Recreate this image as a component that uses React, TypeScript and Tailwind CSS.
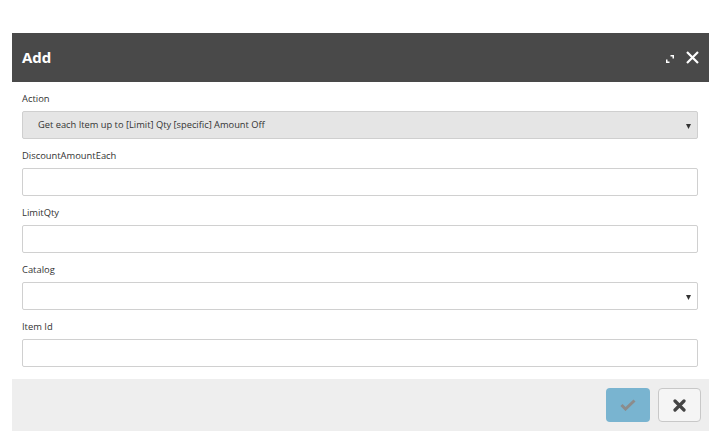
const font = { fontFamily: '"Open Sans", "Segoe UI", sans-serif' };

function Field({ label, children }: { label: string; children: React.ReactNode }) {
  return (
    <div className="mt-[8px] first:mt-0">
      <div className="h-[18px] leading-[18px] text-[9.4px] text-[#333] mb-[3px]">{label}</div>
      {children}
    </div>
  );
}

function Caret() {
  return (
    <svg width="5" height="6" viewBox="0 0 5 6" className="absolute right-[6px] top-[11px]">
      <path d="M0 1h5L2.5 6z" fill="#333" />
    </svg>
  );
}

export default function App() {
  return (
    <div className="w-[721px] h-[446px] bg-white pt-[33px] pl-[12px]" style={font}>
      <div className="w-[697px]">
        <div className="h-[49px] bg-[#494949] flex items-center pl-[10px] pr-[10px]">
          <span className="text-white font-bold text-[15px]">Add</span>
          <div className="ml-auto flex items-center gap-[12px]">
            <svg width="8" height="8" viewBox="0 0 8 8" className="mt-[2px]">
              <path d="M4.5 0.75H7.25V3.5M0.75 4.5V7.25H3.5" stroke="white" strokeWidth="1.5" fill="none" />
            </svg>
            <svg width="13" height="13" viewBox="0 0 13 13">
              <path d="M1 1L12 12M12 1L1 12" stroke="white" strokeWidth="2.2" />
            </svg>
          </div>
        </div>
        <div className="pt-[8px] pb-[12px] pl-[10px] pr-[11px]">
          <Field label="Action">
            <div className="relative h-[28px] bg-[#e5e5e5] border border-[#cfcfcf] rounded-[2px] flex items-center pl-[15px] text-[9.3px] text-[#333]">
              Get each Item up to [Limit] Qty [specific] Amount Off
              <Caret />
            </div>
          </Field>
          <Field label="DiscountAmountEach">
            <input className="block w-full h-[28px] border border-[#d0d0d0] rounded-[2px] outline-none" />
          </Field>
          <Field label="LimitQty">
            <input className="block w-full h-[28px] border border-[#d0d0d0] rounded-[2px] outline-none" />
          </Field>
          <Field label="Catalog">
            <div className="relative h-[28px] bg-white border border-[#d0d0d0] rounded-[2px]">
              <Caret />
            </div>
          </Field>
          <Field label="Item Id">
            <input className="block w-full h-[28px] border border-[#d0d0d0] rounded-[2px] outline-none" />
          </Field>
        </div>
        <div className="h-[52px] bg-[#eeeeee] flex items-center justify-end gap-[8px] pr-[8px]">
          <button className="w-[44px] h-[34px] rounded-[4px] bg-[#79b4d0] flex items-center justify-center">
            <svg width="16" height="12" viewBox="0 0 16 12">
              <path d="M1.5 6L5.5 10L14.5 1.5" stroke="#8c8c8c" strokeWidth="3" fill="none" />
            </svg>
          </button>
          <button className="w-[43px] h-[34px] rounded-[4px] bg-[#f5f5f5] border border-[#c8c8c8] flex items-center justify-center">
            <svg width="13" height="13" viewBox="0 0 13 13">
              <path d="M2 2L11 11M11 2L2 11" stroke="#444" strokeWidth="3.2" strokeLinecap="round" />
            </svg>
          </button>
        </div>
      </div>
    </div>
  );
}
